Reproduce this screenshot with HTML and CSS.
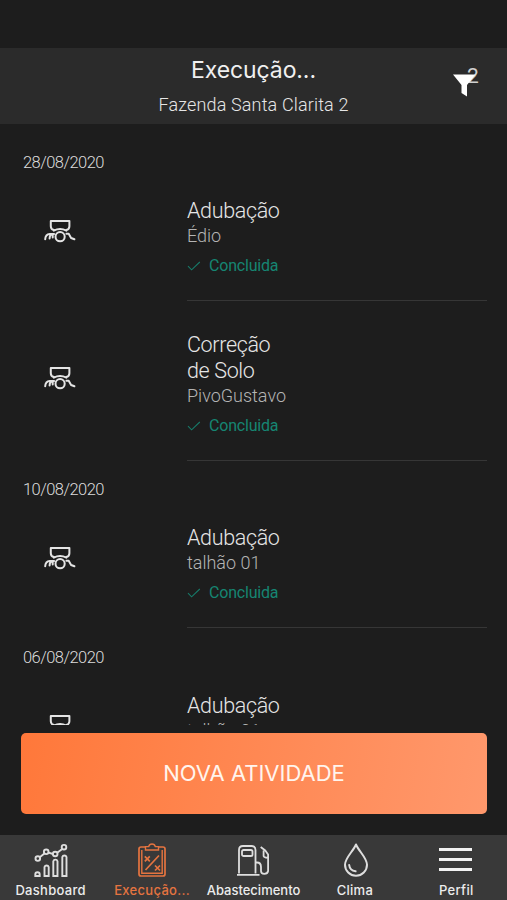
FILE: index.html
```html
<!DOCTYPE html>
<html lang="pt-BR">
<head>
<meta charset="utf-8">
<title>Execução</title>
<link rel="stylesheet" href="styles.css">
</head>
<body>
<svg class="defs" aria-hidden="true">
  <symbol id="spreader" viewBox="0 0 32 24">
    <g fill="none" stroke="#e4e4e4" stroke-width="2" stroke-linejoin="round" stroke-linecap="round">
      <path d="M6.800 2h18.600v5.200q0 3.200-3.200 3.800M6.800 2v5.200q0 3.200 3.200 3.800M9.800 11.600q6.300-3.200 12.600 0"/>
      <circle cx="16.100" cy="17.700" r="4.600"/>
      <path d="M1.200 20.300q.2-5 4.600-5.300h4.300M5.600 19.400q0-2.600 1.600-4M8.700 18.600v-3.200M22.400 14.700h2.300l2.400 4.300 3.300 1.300"/>
    </g>
  </symbol>
  <symbol id="check" viewBox="0 0 14 10">
    <path d="M1 5.200l3.600 3.600L12.800 1" fill="none" stroke="#177a69" stroke-width="1.100"/>
  </symbol>
</svg>
<div class="app">
  <header class="header">
    <h1 class="header-title">Execução...</h1>
    <p class="header-sub">Fazenda Santa Clarita 2</p>
    <div class="filter">
      <span class="filter-count">2</span>
      <svg class="funnel" viewBox="0 0 26 26"><path d="M0 2.500h22.500L14 13v11.500L8.500 21v-8z" fill="#fff"/></svg>
    </div>
  </header>

  <main class="list">
    <h2 class="date">28/08/2020</h2>
    <article class="item">
      <svg class="item-icon"><use href="#spreader"/></svg>
      <div class="item-body">
        <h3 class="item-title">Adubação</h3>
        <p class="item-place">Édio</p>
        <p class="status"><svg class="check"><use href="#check"/></svg>Concluida</p>
      </div>
    </article>
    <article class="item item-next">
      <svg class="item-icon"><use href="#spreader"/></svg>
      <div class="item-body">
        <h3 class="item-title">Correção<br>de Solo</h3>
        <p class="item-place">PivoGustavo</p>
        <p class="status"><svg class="check"><use href="#check"/></svg>Concluida</p>
      </div>
    </article>
    <h2 class="date">10/08/2020</h2>
    <article class="item">
      <svg class="item-icon"><use href="#spreader"/></svg>
      <div class="item-body">
        <h3 class="item-title">Adubação</h3>
        <p class="item-place">talhão 01</p>
        <p class="status"><svg class="check"><use href="#check"/></svg>Concluida</p>
      </div>
    </article>
    <h2 class="date">06/08/2020</h2>
    <article class="item">
      <svg class="item-icon"><use href="#spreader"/></svg>
      <div class="item-body">
        <h3 class="item-title">Adubação</h3>
        <p class="item-place">talhão 01</p>
      </div>
    </article>
  </main>

  <div class="action"><button class="new-button">NOVA ATIVIDADE</button></div>

  <nav class="tabs">
    <a class="tab">
      <svg class="tab-icon" viewBox="0 0 36 36" fill="none" stroke="#dedede" stroke-width="1.900">
        <path d="M6.400 15.400l5-3.800M15.600 10.600l4.400 1.400M24.200 10.800l5-3.800"/>
        <circle cx="4.800" cy="16.600" r="2.300"/><circle cx="13.200" cy="9.800" r="2.300"/><circle cx="22.200" cy="12" r="2.300"/><circle cx="31" cy="5.200" r="2.300"/>
        <path d="M2.300 34v-1.600a2.200 2.200 0 0 1 4.400 0V34zM11.500 34v-9a2.200 2.200 0 0 1 4.200 0v9zM20.300 34V19.200a2.200 2.200 0 0 1 4.200 0V34zM29.300 34V15a2.200 2.200 0 0 1 4.200 0v19z"/>
      </svg>
      <span>Dashboard</span>
    </a>
    <a class="tab tab-active">
      <svg class="tab-icon" viewBox="0 0 36 36" fill="none" stroke="#e57440" stroke-width="1.700">
        <path d="M11.500 5H7Q5 5 5 7v25q0 2 2 2h22q2 0 2-2V7q0-2-2-2h-4.500"/>
        <path d="M11.500 8V4.600h3.200q.6-2.600 3.300-2.600t3.300 2.600h3.200V8zM7.800 8v23.200h20.400V8" stroke-width="1.400"/>
        <path d="M11.500 28L25 13.500M10.800 14.300l5 5M15.800 14.300l-5 5M21 23.500l5 5M26 23.500l-5 5"/>
      </svg>
      <span>Execução...</span>
    </a>
    <a class="tab">
      <svg class="tab-icon" viewBox="0 0 36 36" fill="none" stroke="#dedede" stroke-width="1.800" stroke-linejoin="round">
        <path d="M4 31.500V8q0-4 4-4h8.500q4 0 4 4v23.500M2 32.800h22.500"/>
        <rect x="7" y="8" width="10.500" height="6" rx="1.600"/>
        <path d="M20.500 20.500h1.500q4 0 4 4.500v4q0 2.800 3.300 2.800t3.800-2.800V12.500l-2.800-4-4.600-3.500M28.600 8.500v5.500q0 1.500 4.400 1.800"/>
      </svg>
      <span class="label-long">Abastecimento</span>
    </a>
    <a class="tab">
      <svg class="tab-icon" viewBox="0 0 36 36" fill="none" stroke="#dedede" stroke-width="2" stroke-linecap="round" stroke-linejoin="round">
        <path d="M19 2.500c2.800 6.800 11 13.300 11 20.300a11 11 0 0 1-22 0C8 15.800 16.200 9.300 19 2.500z"/>
        <path d="M12.200 23q.6 5.600 6.400 6.300"/>
      </svg>
      <span>Clima</span>
    </a>
    <a class="tab">
      <svg class="tab-icon" viewBox="0 0 36 36" stroke="#f2f2f2" stroke-width="2.900"><path d="M1 7.500h33M1 17.500h33M1 27.500h33"/></svg>
      <span>Perfil</span>
    </a>
  </nav>
</div>
</body>
</html>
```
FILE: styles.css
```css
* { box-sizing: border-box; margin: 0; padding: 0; }

body {
  background: #1d1d1d;
  color: #e6e6e6;
  font-family: Roboto, "Liberation Sans", sans-serif;
  overflow: hidden;
}

.defs { position: absolute; width: 0; height: 0; }

.app {
  width: 507px;
  height: 900px;
  padding-top: 48px;
  display: flex;
  flex-direction: column;
}

.header {
  position: relative;
  flex: none;
  height: 76px;
  padding-top: 5px;
  background: #2b2b2b;
  text-align: center;
}

.header-title {
  font: 400 23px/34px Inter, sans-serif;
  letter-spacing: -0.1px;
  color: #f0f0f0;
}

.header-sub {
  font-size: 18px;
  line-height: 35px;
  font-weight: 300;
  letter-spacing: 0.15px;
}

.filter { position: absolute; left: 453px; top: 24px; width: 26px; height: 26px; }
.funnel { position: absolute; left: 0; top: 0; width: 26px; height: 26px; }
.filter-count {
  position: absolute;
  left: 14px;
  top: -8px;
  font: 400 21px/24px Roboto, sans-serif;
  color: #d0d0d0;
}

.list {
  flex: none;
  height: 601px;
  padding: 11px 20px 0 23px;
  overflow: hidden;
}

.date {
  margin: 16px 0 21px;
  font-size: 16.5px;
  line-height: 26px;
  font-weight: 300;
  letter-spacing: -0.55px;
  color: #dcdcdc;
}

.date:first-child { margin-top: 15px; }
.date:last-of-type { margin-top: 17px; }

.item { display: flex; align-items: center; }
.item-next { margin-top: 30px; }

.item-icon {
  flex: none;
  width: 32px;
  height: 24px;
  margin: 0 111px 36px 21px;
}

.item-body {
  flex: 1;
  padding: 1px 0 21px;
  border-bottom: 1px solid #363636;
}

/* the last row keeps the full row height, its lower part is below the fold */
.item:last-child .item-body { padding-bottom: 50px; }

.item-title {
  font-size: 21.5px;
  line-height: 26px;
  font-weight: 300;
  letter-spacing: -0.35px;
}

.item-place {
  margin-top: -1px;
  font-size: 18px;
  line-height: 26px;
  font-weight: 300;
  color: #b4b4b4;
}

.status {
  display: flex;
  align-items: center;
  gap: 8px;
  margin-top: 4px;
  font-size: 16px;
  line-height: 26px;
  letter-spacing: -0.2px;
  color: #168572;
}

.check { width: 14px; height: 10px; }

.action { flex: none; padding: 8px 20px 0 21px; height: 110px; }

.new-button {
  display: block;
  width: 100%;
  height: 81px;
  border: 0;
  border-radius: 5px;
  background: linear-gradient(100deg, #ff783a, #ff986c);
  color: #fff5ee;
  font: 400 22px/81px Inter, sans-serif;
}

.tabs {
  flex: none;
  height: 65px;
  display: grid;
  grid-template-columns: repeat(5, 1fr);
  background: #393939;
}

.tab {
  display: flex;
  flex-direction: column;
  align-items: center;
  padding-top: 7px;
  font: 500 13px/16px Inter, sans-serif;
  letter-spacing: 0.3px;
  color: #ececec;
  white-space: nowrap;
}

.label-long { letter-spacing: 0; }
.tab-icon { width: 36px; height: 36px; margin-bottom: 4px; }
.tab-active { color: #e57440; }
```
